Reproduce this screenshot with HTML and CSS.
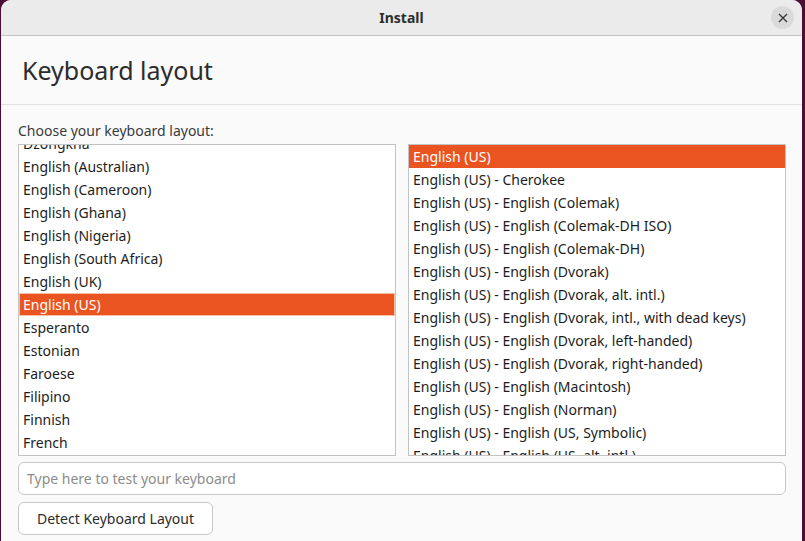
FILE: index.html
```html
<!DOCTYPE html>
<html>
<head>
<meta charset="utf-8">
<link rel="stylesheet" href="styles.css">
</head>
<body>
<div class="window">
  <div class="titlebar">
    <span class="title">Install</span>
    <span class="close">
      <svg width="10" height="10" viewBox="0 0 10 10"><path d="M1 1L9 9M9 1L1 9" stroke="#3a3a3a" stroke-width="1.4" fill="none"/></svg>
    </span>
  </div>
  <div class="header"><h1 class="heading">Keyboard layout</h1></div>
  <div class="content">
    <div class="label">Choose your keyboard layout:</div>
    <div class="lists">
      <div class="list">
        <div class="rows shifted">
          <div class="row">Dzongkha</div>
          <div class="row">English (Australian)</div>
          <div class="row">English (Cameroon)</div>
          <div class="row">English (Ghana)</div>
          <div class="row">English (Nigeria)</div>
          <div class="row">English (South Africa)</div>
          <div class="row">English (UK)</div>
          <div class="row selected focused">English (US)</div>
          <div class="row">Esperanto</div>
          <div class="row">Estonian</div>
          <div class="row">Faroese</div>
          <div class="row">Filipino</div>
          <div class="row">Finnish</div>
          <div class="row">French</div>
          <div class="row">Friulian</div>
        </div>
      </div>
      <div class="list">
        <div class="rows">
          <div class="row selected">English (US)</div>
          <div class="row">English (US) - Cherokee</div>
          <div class="row">English (US) - English (Colemak)</div>
          <div class="row">English (US) - English (Colemak-DH ISO)</div>
          <div class="row">English (US) - English (Colemak-DH)</div>
          <div class="row">English (US) - English (Dvorak)</div>
          <div class="row">English (US) - English (Dvorak, alt. intl.)</div>
          <div class="row">English (US) - English (Dvorak, intl., with dead keys)</div>
          <div class="row">English (US) - English (Dvorak, left-handed)</div>
          <div class="row">English (US) - English (Dvorak, right-handed)</div>
          <div class="row">English (US) - English (Macintosh)</div>
          <div class="row">English (US) - English (Norman)</div>
          <div class="row">English (US) - English (US, Symbolic)</div>
          <div class="row">English (US) - English (US, alt. intl.)</div>
        </div>
      </div>
    </div>
    <input class="test" type="text" placeholder="Type here to test your keyboard">
    <div><button class="detect">Detect Keyboard Layout</button></div>
  </div>
</div>
</body>
</html>
```

FILE: styles.css
```css
html, body {
  margin: 0;
  padding: 0;
  width: 805px;
  height: 541px;
  overflow: hidden;
  background: #4a0f33;
  font-family: "Noto Sans", "DejaVu Sans", sans-serif;
}
body {
  display: flex;
}
.window {
  width: 801px;
  margin-left: 1px;
  height: 541px;
  background: #fafafa;
  border-radius: 10px 10px 0 0;
  overflow: hidden;
  display: flex;
  flex-direction: column;
}
.titlebar {
  height: 35px;
  background: #ebebeb;
  border-bottom: 1px solid #c4c4c4;
  display: flex;
  align-items: center;
  justify-content: center;
  position: relative;
}
.title {
  font-weight: bold;
  font-size: 14px;
  color: #2e2e2e;
}
.close {
  position: absolute;
  right: 8px;
  top: 6px;
  width: 23px;
  height: 23px;
  border-radius: 50%;
  background: #dadada;
  display: flex;
  align-items: center;
  justify-content: center;
}
.header {
  height: 68px;
  border-bottom: 1px solid #e2e2e2;
  display: flex;
  align-items: center;
}
.heading {
  margin: 0 0 0 21px;
  font-weight: normal;
  font-size: 25px;
  color: #2c2c2c;
}
.content {
  padding: 17px 16px 0 17px;
  display: flex;
  flex-direction: column;
}
.label {
  font-size: 14px;
  color: #3a3a3a;
  height: 22px;
  line-height: 18px;
}
.lists {
  display: flex;
  gap: 12px;
}
.list {
  width: 376px;
  height: 310px;
  border: 1px solid #c3c3c3;
  background: #ffffff;
  overflow: hidden;
}
.rows.shifted {
  margin-top: -13px;
}
.row {
  height: 23px;
  line-height: 23px;
  padding-left: 4px;
  font-size: 14px;
  color: #1d1d1d;
  white-space: nowrap;
}
.row.selected {
  background: #e95420;
  color: #ffffff;
}
.row.focused {
  margin: 1px 1px;
  padding-left: 3px;
  box-shadow: 0 0 0 1px #f5bfa6;
  height: 21px;
  line-height: 21px;
}
.test {
  margin-top: 6px;
  height: 33px;
  box-sizing: border-box;
  border: 1px solid #c8c8c8;
  border-radius: 6px;
  background: #ffffff;
  padding: 0 8px;
  font-family: inherit;
  font-size: 14px;
  outline: none;
}
.test::placeholder {
  color: #8c8c8c;
}
.detect {
  margin-top: 7px;
  width: 195px;
  height: 33px;
  border: 1px solid #c8c8c8;
  border-radius: 6px;
  background: #ffffff;
  font-family: inherit;
  font-size: 14px;
  color: #2c2c2c;
}
```
